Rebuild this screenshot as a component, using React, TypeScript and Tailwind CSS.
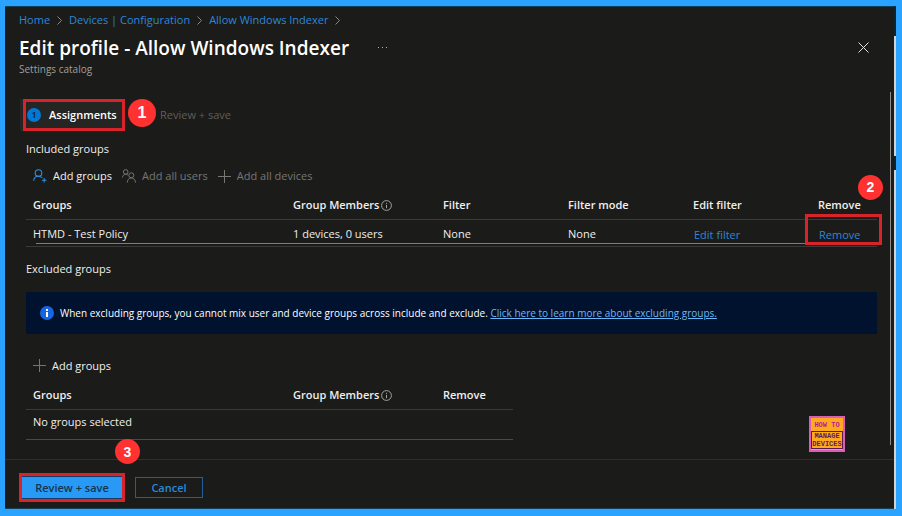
import type { ReactNode } from "react";

function Chevron() {
  return (
    <svg className="mx-[7px] h-[9px] w-[5px] shrink-0" viewBox="0 0 5 9" fill="none" stroke="#8a8886" strokeWidth="1" aria-hidden="true">
      <path d="M.5.5l4 4-4 4" />
    </svg>
  );
}

function PersonAdd() {
  return (
    <svg className="h-[14px] w-[14px]" viewBox="0 0 14 14" fill="none" stroke="#2f8fdd" strokeWidth="1.1" aria-hidden="true">
      <circle cx="5.5" cy="4" r="3.3" />
      <path d="M.6 11.8c.3-2.700 2.200-4.500 4.900-4.500 1.600 0 2.900.6 3.800 1.700M11.200 9v4.600M8.900 11.300h4.600" />
    </svg>
  );
}

function People() {
  return (
    <svg className="h-[14px] w-[14px]" viewBox="0 0 14 14" fill="none" stroke="#777775" strokeWidth="1" aria-hidden="true">
      <circle cx="3.700" cy="2.900" r="2.300" />
      <path d="M.5 8.500c.1-1.900 1.400-3.200 3.200-3.200.9 0 1.600.3 2.100.8" />
      <circle cx="9.300" cy="6.300" r="2.500" />
      <path d="M5.200 13.500c.2-2.700 1.800-4.600 4.100-4.600s4 1.900 4.200 4.600" />
    </svg>
  );
}

function Plus({ className }: { className: string }) {
  return (
    <svg className={`h-[13px] w-[13px] ${className}`} viewBox="0 0 13 13" fill="none" strokeWidth="1" aria-hidden="true">
      <path d="M6.500 0v13M0 6.500h13" />
    </svg>
  );
}

function InfoOutline() {
  return (
    <svg className="ml-[2px] inline-block h-[11px] w-[11px] align-[-2px]" viewBox="0 0 11 11" fill="none" stroke="#a3a29f" strokeWidth="1" aria-hidden="true">
      <circle cx="5.500" cy="5.500" r="4.900" />
      <path d="M5.500 4.800v3.400M5.500 2.800v1" />
    </svg>
  );
}

function Command({ icon, children, disabled }: { icon: ReactNode; children: ReactNode; disabled?: boolean }) {
  return (
    <button type="button" disabled={disabled} className="flex items-center gap-[6px] text-[11px] text-[#f0efee] disabled:text-[#777775]">
      {icon}
      {children}
    </button>
  );
}

function Step({ n, className }: { n: number; className: string }) {
  return (
    <span className={`absolute z-10 flex items-center justify-center rounded-full bg-[#ff3131] font-['Liberation_Sans',sans-serif] font-bold text-white ${className}`}>
      {n}
    </span>
  );
}

const link = "text-[#2b88d8]";
const th = "h-[27px] pl-[7px] pb-px text-left font-semibold";
const td = "relative pt-[2px] pl-[7px]";

export default function App() {
  return (
    <div className="flex min-h-screen bg-[#29a3ff] pt-[6px] pr-[6px] pb-[7px] pl-[5px] font-['Open_Sans','Noto_Sans',sans-serif] text-[11px] leading-4 text-[#f0efee]">
      <div className="flex min-w-0 flex-1 flex-col border-y border-[#134058] bg-[#1b1b19]">
        <header className="pl-[14px]">
          <nav aria-label="Breadcrumb" className={`flex h-[26px] items-center text-[11px] ${link}`}>
            <a href="#home">Home</a>
            <Chevron />
            <a href="#devices">Devices | Configuration</a>
            <Chevron />
            <a href="#profile">Allow Windows Indexer</a>
            <Chevron />
          </nav>
          <div className="flex h-[29px] items-center">
            <h1 className="text-[19px] leading-7 font-semibold whitespace-nowrap text-white">Edit profile - Allow Windows Indexer</h1>
            <button type="button" aria-label="More" className="ml-[28px]">
              <svg className="h-[3px] w-[11px]" viewBox="0 0 11 3" fill="#b5b4b2" aria-hidden="true">
                <path d="M1 1h1v1H1zM5 1h1v1H5zM9 1h1v1H9z" />
              </svg>
            </button>
            <button type="button" aria-label="Close" className="mr-[25px] ml-auto">
              <svg className="h-[11px] w-[11px]" viewBox="0 0 11 11" stroke="#e4e3e1" strokeWidth="1" aria-hidden="true">
                <path d="M.5.5l10 10M10.500.5l-10 10" />
              </svg>
            </button>
          </div>
          <p className="h-[30px] text-[10px] leading-[14px] text-[#a19f9d]">Settings catalog</p>
        </header>

        <main className="relative mr-[3px] mb-[14px] flex-1 border-r border-[#8f8e8c] pr-[13px] pl-[21px]">
          <div className="flex h-[46px] items-center">
            <div className="relative -ml-[6px] flex h-[32px] w-[105px] items-center bg-[#252523] pl-[7px]">
              <span className="flex h-[14px] w-[14px] items-center justify-center rounded-full bg-[#0078d4] text-[9px] font-semibold text-[#1b1b19]">1</span>
              <span className="ml-[8px] font-semibold text-white">Assignments</span>
              <span className="absolute inset-y-0 right-0 left-[3px] border-[3px] border-[#d8232a]" />
              <Step n={1} className="top-0 -right-[31px] h-[28px] w-[28px] text-[16px]" />
            </div>
            <span className="ml-[35px] text-[#5f5e5c]">Review + save</span>
          </div>

          <h2 className="mt-[3px] leading-4">Included groups</h2>
          <div className="mt-[11px] flex h-4 items-center gap-[10px] pl-[7px]">
            <Command icon={<PersonAdd />}>Add groups</Command>
            <Command icon={<People />} disabled>Add all users</Command>
            <Command icon={<Plus className="stroke-[#777775]" />} disabled>Add all devices</Command>
          </div>

          <table className="mt-[8px] w-full table-fixed border-collapse">
            <colgroup>
              <col className="w-[260px]" />
              <col className="w-[150px]" />
              <col className="w-[125px]" />
              <col className="w-[125px]" />
              <col className="w-[125px]" />
              <col />
            </colgroup>
            <thead>
              <tr className="border-b border-[#3a3a38]">
                <th className={th}>Groups</th>
                <th className={th}>Group Members<InfoOutline /></th>
                <th className={th}>Filter</th>
                <th className={th}>Filter mode</th>
                <th className={th}>Edit filter</th>
                <th className={th}>Remove</th>
              </tr>
            </thead>
            <tbody>
              <tr className="h-[27px] border-b border-[#3a3a38]">
                <td className={td}>
                  HTMD - Test Policy
                  <span className="absolute right-0 bottom-[2px] left-[10px] h-px bg-[#7d7c7a]" />
                </td>
                <td className={td}>
                  1 devices, 0 users
                  <span className="absolute inset-x-0 bottom-[2px] h-px bg-[#7d7c7a]" />
                </td>
                <td className={td}>
                  None
                  <span className="absolute inset-x-0 bottom-[2px] h-px bg-[#7d7c7a]" />
                </td>
                <td className={td}>
                  None
                  <span className="absolute inset-x-0 bottom-[2px] h-px bg-[#7d7c7a]" />
                </td>
                <td className="relative pt-[4px] pl-[8px]">
                  <a href="#edit-filter" className={link}>Edit filter</a>
                  <span className="absolute inset-x-0 bottom-[2px] h-px bg-[#7d7c7a]" />
                </td>
                <td className="relative pt-[4px] pl-[8px]">
                  <a href="#remove" className={link}>Remove</a>
                  <span className="absolute -top-[6px] -right-[5px] bottom-[1px] -left-[6px] border-[3px] border-[#d8232a]" />
                  <Step n={2} className="-top-[45px] -right-[6px] h-[25px] w-[25px] text-[14px]" />
                </td>
              </tr>
            </tbody>
          </table>

          <h2 className="mt-[14px] leading-4">Excluded groups</h2>
          <div className="mt-[15px] flex h-[42px] items-center bg-[#00122e] pl-[14px] text-[10px] text-white">
            <svg className="mr-[6px] h-[14px] w-[14px]" viewBox="0 0 14 14" aria-hidden="true">
              <circle cx="7" cy="7" r="7" fill="#1566e0" />
              <path d="M6 3h2v2H6zM6 6h2v5H6z" fill="#fff" />
            </svg>
            <p>
              When excluding groups, you cannot mix user and device groups across include and exclude.{" "}
              <a href="#learn-more" className="text-[#6cb8f6] underline">Click here to learn more about excluding groups.</a>
            </p>
          </div>

          <div className="mt-[24px] flex h-4 items-center pl-[7px]">
            <Command icon={<Plus className="stroke-[#2b88d8]" />}>Add groups</Command>
          </div>
          <table className="mt-[9px] w-[487px] table-fixed border-collapse">
            <colgroup>
              <col className="w-[260px]" />
              <col className="w-[150px]" />
              <col />
            </colgroup>
            <thead>
              <tr className="border-b border-[#3a3a38]">
                <th className={th}>Groups</th>
                <th className={th}>Group Members<InfoOutline /></th>
                <th className={th}>Remove</th>
              </tr>
            </thead>
            <tbody>
              <tr className="h-[30px] border-b border-[#4a4a48]">
                <td colSpan={3} className="pb-[6px] pl-[7px]">No groups selected</td>
              </tr>
            </tbody>
          </table>

          <div className="absolute right-[45px] -bottom-[7px] h-[36px] w-[36px] border-2 border-[#d95fb4] bg-[#ffa91f] pt-[3px] text-center font-['Liberation_Mono',monospace] text-[7px] leading-[8px] font-bold">
            <p className="text-[#c013a0]">HOW TO</p>
            <p className="mt-[2px] border border-[#5a1a50] text-[#6a1463]">
              <span className="block">MANAGE</span>
              <span className="block">DEVICES</span>
            </p>
          </div>
        </main>

        <footer className="flex h-[49px] items-start gap-[10px] border-t border-[#2f2f2d] pt-[13px] pl-[14px]">
          <div className="relative border-[3px] border-[#d8232a]">
            <button type="button" className="block h-[23px] w-[100px] border-y border-[#143c66] bg-[#2899f5] font-semibold text-[#16344f]">Review + save</button>
            <Step n={3} className="-top-[37px] -right-[18px] h-[25px] w-[25px] text-[14px]" />
          </div>
          <button type="button" className="mt-[4px] h-[21px] w-[68px] border border-[#20609a] font-semibold text-[#2b88d8]">Cancel</button>
        </footer>
      </div>
      <div className="flex w-[2px] flex-col bg-[#d0d3d4]">
        <span className="h-[30px] bg-[#10242e]" />
        <span className="mt-[120px] h-[14px] bg-[#10242e]" />
      </div>
    </div>
  );
}
